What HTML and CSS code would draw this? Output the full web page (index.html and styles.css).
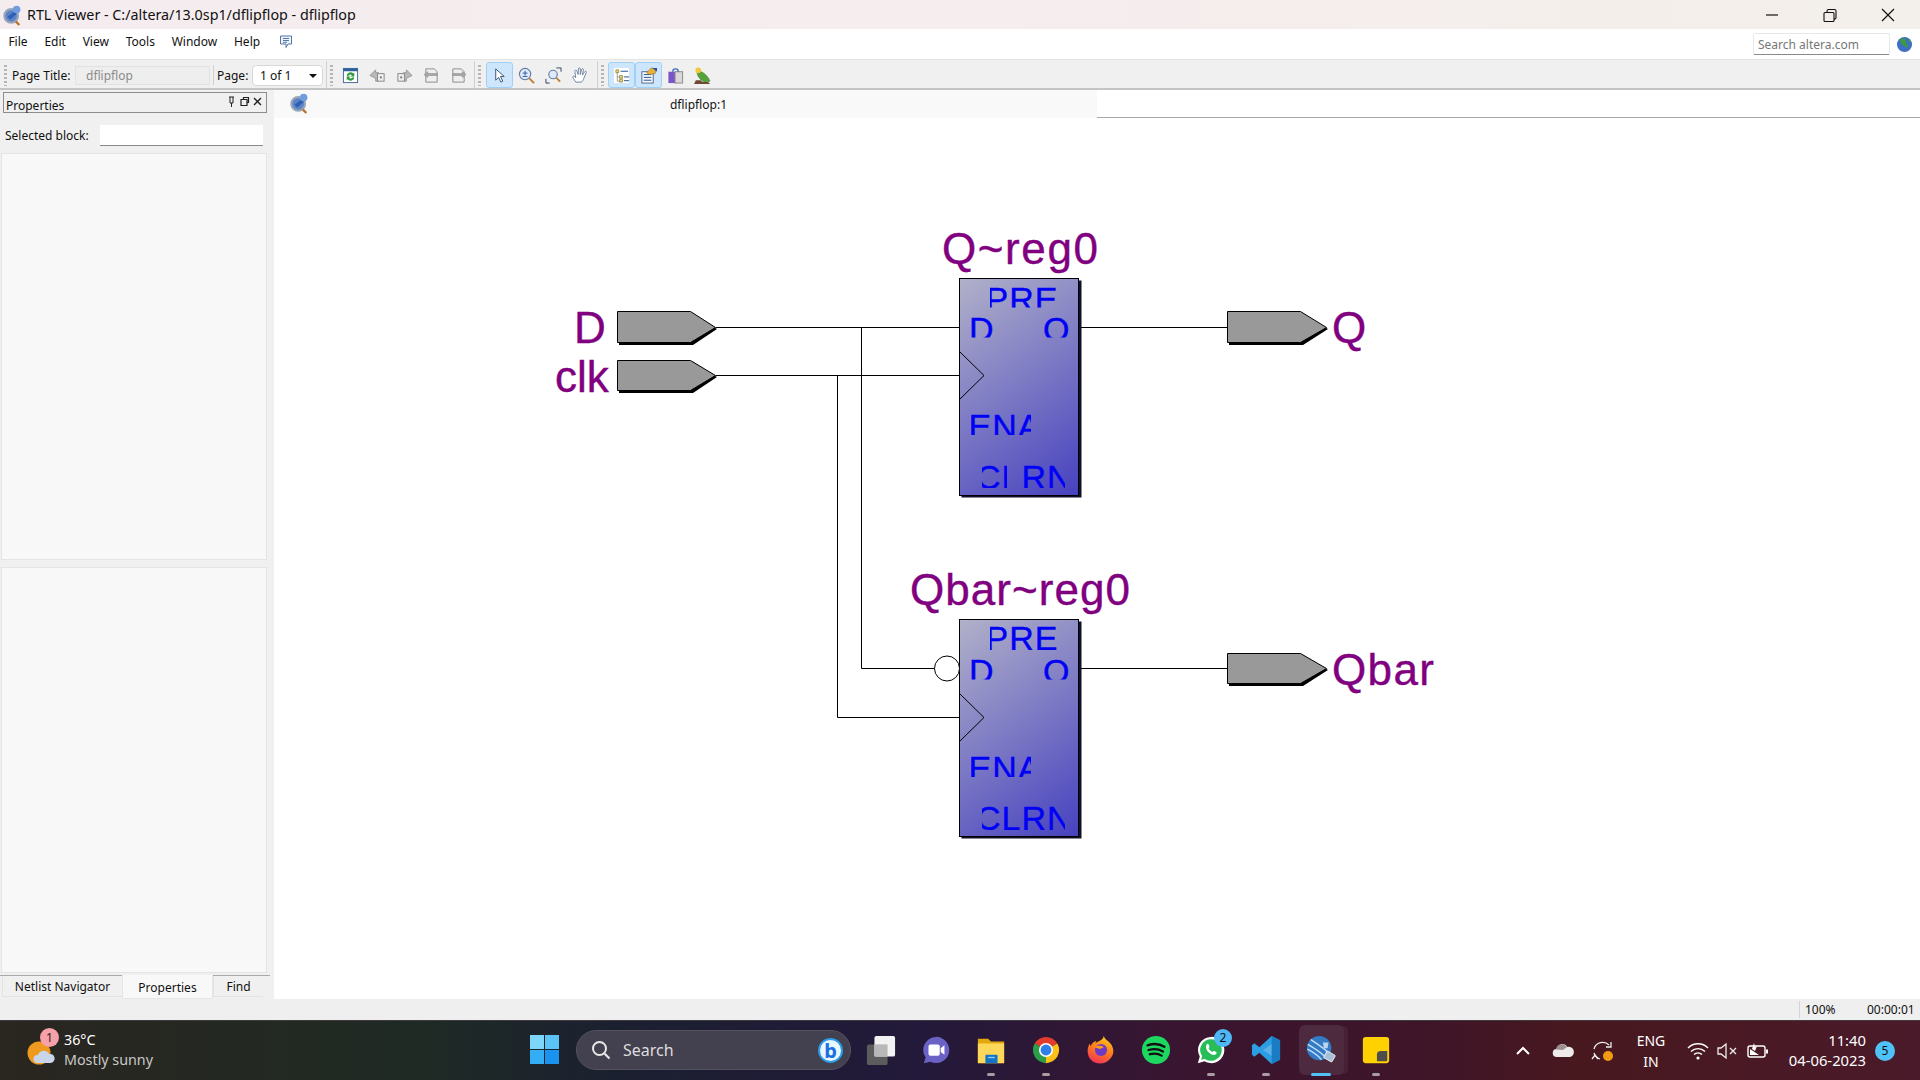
FILE: index.html
```html
<!DOCTYPE html>
<html lang="en">
<head>
  <meta charset="UTF-8">
  <title>RTL Viewer - C:/altera/13.0sp1/dflipflop - dflipflop</title>
  <link rel="stylesheet" href="styles.css">
</head>
<body>
  <svg class="defs">
    <defs>
      <symbol id="rtlIcon" viewBox="0 0 22 24">
        <circle cx="9" cy="13" r="7.5" fill="#5a83c8" stroke="#9aa7b8" stroke-width="2.4"/>
        <path d="M5 14l8-6 2 3-7 6z" fill="#2f5fb0"/>
        <circle cx="15" cy="6" r="4.2" fill="#6f9de0"/>
        <path d="M14 19l4 4" stroke="#b8752c" stroke-width="2.6"/>
      </symbol>
    </defs>
  </svg>

  <header class="titlebar">
    <svg class="title-icon"><use href="#rtlIcon"/></svg>
    <span class="title-text">RTL Viewer - C:/altera/13.0sp1/dflipflop - dflipflop</span>
    <div class="win-btns">
      <svg viewBox="0 0 58 28"><path d="M23 14h12" stroke="#111" stroke-width="1.2"/></svg>
      <svg viewBox="0 0 58 28"><path d="M24 11.5h8a1 1 0 0 1 1 1v7a1 1 0 0 1-1 1h-8a1 1 0 0 1-1-1v-7a1 1 0 0 1 1-1zM26 11.5V10a1.5 1.5 0 0 1 1.500-1.500h6A1.500 1.500 0 0 1 35 10v6.500a1.500 1.500 0 0 1-2 1.500" fill="none" stroke="#111" stroke-width="1.100"/></svg>
      <svg viewBox="0 0 58 28"><path d="M23 8l12 12M35 8L23 20" stroke="#111" stroke-width="1.200"/></svg>
    </div>
  </header>

  <nav class="menubar">
    <span class="menu-item">File</span>
    <span class="menu-item">Edit</span>
    <span class="menu-item">View</span>
    <span class="menu-item">Tools</span>
    <span class="menu-item">Window</span>
    <span class="menu-item">Help</span>
    <svg class="menu-note" viewBox="0 0 14 14"><path d="M1.500 1h11v8H9l-2 3.500V9H1.500z" fill="#eef3fb" stroke="#5578a8"/><path d="M4 3.500h6M4 5.500h6M4 7.300h4" stroke="#5578a8"/></svg>
    <div class="search-box">
      <span class="search-input">Search altera.com</span>
      <svg class="globe" viewBox="0 0 18 18"><circle cx="9" cy="9" r="8" fill="#3f6fc4"/><path d="M4 4l4-2 3 2-1 3 3 3-2 3-2-3-3-1z" fill="#3d9a3c"/><path d="M13 3l3 3-2 1z" fill="#3d9a3c"/></svg>
    </div>
  </nav>

  <div class="toolbar">
    <span class="grip"></span>
    <label class="tool-label title-label">Page Title:</label>
    <span class="page-title">dflipflop</span>
    <span class="sep sep-light"></span>
    <label class="tool-label page-label">Page:</label>
    <span class="page-select">1 of 1<i class="caret"></i></span>
    <span class="sep"></span>
    <span class="grip"></span>
    <div class="tool-group">
      <span class="tool"><svg viewBox="0 0 18 18"><rect x="1.500" y="1.500" width="15" height="15" fill="#fff" stroke="#456a94"/><rect x="1.500" y="1.500" width="15" height="3" fill="#2c5f9e"/><path d="M5 9a4 4 0 0 1 7-2l1-1v4h-4l1.500-1.300A2.400 2.400 0 0 0 6.500 10zM13 11a4 4 0 0 1-7 2l-1 1v-4h4l-1.500 1.300a2.400 2.400 0 0 0 4-.8z" fill="#2f9a3e"/></svg></span>
      <span class="tool"><svg viewBox="0 0 18 18"><path d="M1 9l6-6v3h3v9H7v-3z" fill="#b9b9b9" stroke="#999"/><rect x="9" y="7" width="7" height="8" fill="#eee" stroke="#888"/><rect x="11.500" y="10" width="2" height="2" fill="#777"/></svg></span>
      <span class="tool"><svg viewBox="0 0 18 18"><path d="M17 9l-6-6v3H8v9h3v-3z" fill="#b9b9b9" stroke="#999"/><rect x="2" y="7" width="7" height="8" fill="#eee" stroke="#888"/><rect x="4.500" y="10" width="2" height="2" fill="#777"/></svg></span>
      <span class="tool"><svg viewBox="0 0 18 18"><path d="M3 2h9l3 3v11H3z" fill="#eee" stroke="#8a8a8a"/><path d="M1 8l4-3v2h10v2H5v2z" fill="#a9a9a9" stroke="#888" stroke-width=".6"/></svg></span>
      <span class="tool"><svg viewBox="0 0 18 18"><path d="M3 2h9l3 3v11H3z" fill="#eee" stroke="#8a8a8a"/><path d="M17 8l-4-3v2H3v2h10v2z" fill="#a9a9a9" stroke="#888" stroke-width=".6"/></svg></span>
    </div>
    <span class="sep"></span>
    <span class="grip"></span>
    <div class="tool-group tool-group-mid">
      <span class="tool tool-on"><svg viewBox="0 0 18 18"><path d="M5 2v12l3-3 2.500 5 2-1-2.500-5h4z" fill="#fff" stroke="#3c4f70"/></svg></span>
      <span class="tool"><svg viewBox="0 0 18 18"><circle cx="7.500" cy="7.500" r="6" fill="#dfe9f7" stroke="#5f7da8" stroke-width="1.200"/><path d="M5 6.500h5M7.500 4v5M5 10h5" stroke="#2a5aa8"/><path d="M12 12l5 5" stroke="#c07c30" stroke-width="2"/></svg></span>
      <span class="tool"><svg viewBox="0 0 18 18"><circle cx="8.500" cy="8" r="4.500" fill="#dfe9f7" stroke="#5f7da8" stroke-width="1.200"/><path d="M12 11.500l4 4" stroke="#c07c30" stroke-width="2"/><path d="M1 12.500V17h4M12 1h5v4" fill="none" stroke="#2c3f5c"/></svg></span>
      <span class="tool"><svg viewBox="0 0 18 18"><path d="M4 16c-2-3-3.500-5-3-6 1-1 2 .5 3 1.500L3 4.500c0-1.500 2-1.500 2.200 0L6.500 8l.3-6c.1-1.300 2-1.300 2 0V8l1.400-5.500c.4-1.200 2.200-.8 1.900.5L11 8.500l2.500-3.500c.8-1 2.200-.2 1.600 1L12.500 12c-.5 2-1.500 3-2.500 4z" fill="#fff" stroke="#6a7f9c"/></svg></span>
    </div>
    <span class="sep"></span>
    <span class="grip"></span>
    <div class="tool-group">
      <span class="tool tool-on"><svg viewBox="0 0 18 18"><rect x="1" y="1" width="16" height="16" fill="#fff"/><path d="M3 3h3v3H3zM7 9h3v3H7zM7 13h3v3H7z" fill="#f3d36a" stroke="#6c6320" stroke-width=".6"/><path d="M4.500 6v9H7M4.500 10.500H7" fill="none" stroke="#777" stroke-width=".7"/><path d="M8 4.500h8M11.500 10.500H17M11.500 14.500H17" stroke="#1f4f8f"/></svg></span>
      <span class="tool tool-on"><svg viewBox="0 0 18 18"><rect x="2" y="5" width="12" height="12" fill="#f4f6fa" stroke="#52678a"/><path d="M4 8h8M4 11h8M4 14h8" stroke="#1f4f8f"/><path d="M7 6l5-5 5 1-1 5-6 1z" fill="#e8b13c" stroke="#8a6a20" stroke-width=".6"/><path d="M13 1h5v4z" fill="#2c4f9e"/></svg></span>
      <span class="tool"><svg viewBox="0 0 18 18"><rect x="1.500" y="5" width="8" height="12" fill="#7a55c8"/><rect x="8.500" y="5" width="8" height="12" fill="#d9d9d9" stroke="#888"/><path d="M6 5a3 3 0 0 1 6 0" fill="none" stroke="#3f6fc4" stroke-width="1.400"/></svg></span>
      <span class="tool"><svg viewBox="0 0 18 18"><path d="M0 18l2-4h5l2 2h6l2 2z" fill="#6c4a34"/><path d="M3 4c5 0 11 4 14 11l-6 1C7 14 3 10 3 4z" fill="#55a33b" stroke="#2d6d20" stroke-width=".5"/><circle cx="4.500" cy="3.500" r="3" fill="#f0c93a"/></svg></span>
    </div>
  </div>

  <main class="workspace">
    <aside class="side-panel">
      <div class="dock-head">
        <span>Properties</span>
        <svg class="dock-btns" viewBox="0 0 36 12"><path d="M3 1h5M4 1v6h3V1M5.500 7v4" fill="none" stroke="#222"/><path d="M15 3.500h6v6h-6zM17.500 3.500V1.500h5v5h-1.500" fill="none" stroke="#222" stroke-width="1.200"/><path d="M28 2l7 7M35 2l-7 7" stroke="#222" stroke-width="1.400"/></svg>
      </div>
      <div class="field-row">
        <label>Selected block:</label>
        <span class="field"></span>
      </div>
      <div class="list-box list-top"></div>
      <div class="list-box list-bottom"></div>
      <div class="side-tabs">
        <span class="side-tab tab-netlist">Netlist Navigator</span>
        <span class="side-tab tab-active">Properties</span>
        <span class="side-tab tab-find">Find</span>
      </div>
    </aside>

    <section class="viewer">
      <div class="tabstrip">
        <div class="sheet-tab">
          <svg class="sheet-icon"><use href="#rtlIcon"/></svg>
          <span>dflipflop:1</span>
        </div>
      </div>

      <!-- schematic, drawn in screen coordinates -->
      <svg class="schematic" width="1646" height="881" viewBox="274 118 1646 881">
        <defs>
          <linearGradient id="regFill" x1="0" y1="0" x2=".5" y2="1.200">
            <stop offset="0" stop-color="#b1b1c9"/>
            <stop offset="1" stop-color="#4742bf"/>
          </linearGradient>
          <clipPath id="cPre1"><rect x="990" y="284" width="67" height="23.500"/></clipPath>
          <clipPath id="cD1"><rect x="971" y="314" width="25" height="23.500"/></clipPath>
          <clipPath id="cQ1"><rect x="1043" y="314" width="28" height="23.500"/></clipPath>
          <clipPath id="cEna1"><rect x="971" y="411" width="60" height="24"/></clipPath>
          <clipPath id="cClr1"><path d="M982 464h25v24h-25zM1021 464h44v24h-44z"/></clipPath>
          <clipPath id="cPre2"><rect x="990" y="626" width="67" height="24"/></clipPath>
          <clipPath id="cD2"><rect x="971" y="656" width="25" height="23.500"/></clipPath>
          <clipPath id="cQ2"><rect x="1043" y="656" width="28" height="23.500"/></clipPath>
          <clipPath id="cEna2"><rect x="971" y="753" width="60" height="24"/></clipPath>
          <clipPath id="cClr2"><rect x="982" y="806" width="83" height="24"/></clipPath>
        </defs>

        <g class="wires">
          <path d="M716 327.500H959M716 375.500H959M861.500 327.500V668.500H935M837.500 375.500V717.500H959M1080 327.500H1227M1080 668.500H1227"/>
        </g>

        <g class="port">
          <path class="port-shadow" d="M619 314H693L717 329 693 345H619z"/>
          <path class="port-body" d="M617.500 311.500H690.500L715.500 327.500 690.500 342.500H617.500z"/>
          <path class="port-shadow" d="M619 362H693L717 377 693 393H619z"/>
          <path class="port-body" d="M617.500 360.500H690.500L715.500 375.500 690.500 390.500H617.500z"/>
          <path class="port-shadow" d="M1229 314H1303L1328 329 1303 345H1229z"/>
          <path class="port-body" d="M1227.500 311.500H1300.500L1326.500 327.500 1300.500 342.500H1227.500z"/>
          <path class="port-shadow" d="M1229 655H1303L1328 670 1303 686H1229z"/>
          <path class="port-body" d="M1227.500 653.500H1300.500L1326.500 668.500 1300.500 683.500H1227.500z"/>
        </g>

        <text class="net-label" x="574" y="343">D</text>
        <text class="net-label" x="555" y="392">clk</text>
        <text class="net-label" x="1332" y="343">Q</text>
        <text class="net-label" x="1332" y="685" textLength="102" lengthAdjust="spacing">Qbar</text>
        <text class="net-label" x="942" y="264" textLength="156" lengthAdjust="spacing">Q~reg0</text>
        <text class="net-label" x="910" y="605" textLength="220" lengthAdjust="spacing">Qbar~reg0</text>

        <g class="reg">
          <rect class="reg-shadow" x="961.500" y="280.500" width="120" height="217"/>
          <rect class="reg-body" fill="url(#regFill)" x="959.500" y="278.500" width="119" height="217"/>
          <path class="clk-mark" d="M959.500 351.500L984 375.500 959.500 399.500"/>
          <text class="pin" x="985.500" y="311" clip-path="url(#cPre1)">PRE</text>
          <text class="pin" x="969" y="341" clip-path="url(#cD1)">D</text>
          <text class="pin" x="1043" y="341" clip-path="url(#cQ1)">Q</text>
          <text class="pin" x="968.500" y="438" clip-path="url(#cEna1)">ENA</text>
          <text class="pin" x="976" y="488.500" clip-path="url(#cClr1)">CLRN</text>
        </g>
        <g class="reg">
          <rect class="reg-shadow" x="961.500" y="621.500" width="120" height="217"/>
          <rect class="reg-body" fill="url(#regFill)" x="959.500" y="619.500" width="119" height="217"/>
          <path class="clk-mark" d="M959.500 693.500L984 717.500 959.500 741.500"/>
          <circle class="bubble" cx="947" cy="668.500" r="12.500"/>
          <text class="pin" x="985.500" y="650" clip-path="url(#cPre2)">PRE</text>
          <text class="pin" x="969" y="683" clip-path="url(#cD2)">D</text>
          <text class="pin" x="1043" y="683" clip-path="url(#cQ2)">Q</text>
          <text class="pin" x="968.500" y="780" clip-path="url(#cEna2)">ENA</text>
          <text class="pin" x="976" y="829.500" clip-path="url(#cClr2)">CLRN</text>
        </g>
      </svg>
    </section>
  </main>

  <footer class="statusbar">
    <span class="status-zoom">100%</span>
    <span class="status-time">00:00:01</span>
  </footer>

  <div class="taskbar">
    <div class="weather">
      <svg class="weather-icon" viewBox="0 0 28 26"><circle cx="12" cy="14" r="11.500" fill="#ee9a1e"/><path d="M10 24a4 4 0 0 1 1-8 6 6 0 0 1 11-1 4.500 4.500 0 0 1 2 9z" fill="#c9d6ea"/></svg>
      <span class="weather-badge">1</span>
      <div class="weather-text">
        <span>36°C</span>
        <span class="weather-sub">Mostly sunny</span>
      </div>
    </div>

    <svg class="start" viewBox="0 0 29 29"><rect width="14" height="14" fill="#7fd6fb"/><rect x="15" width="14" height="14" fill="#5cc3f7"/><rect y="15" width="14" height="14" fill="#33aef5"/><rect x="15" y="15" width="14" height="14" fill="#1a93f0"/></svg>

    <div class="search-pill">
      <svg class="search-glass" viewBox="0 0 20 20"><circle cx="8.500" cy="8.500" r="6.500" fill="none" stroke="#e8e8e8" stroke-width="2"/><path d="M13.500 13.500l5 5" stroke="#e8e8e8" stroke-width="2.200"/></svg>
      <span>Search</span>
      <span class="bing"><b>b</b></span>
    </div>

    <div class="apps">
      <span class="app"><svg viewBox="0 0 32 32"><rect x="1" y="10" width="22" height="22" rx="2" fill="#5c5c5c"/><rect x="9" y="1" width="22" height="22" rx="2" fill="#f2f2f2"/><rect x="9" y="10" width="14" height="13" fill="#b8b8b8"/></svg></span>
      <span class="app"><svg viewBox="0 0 32 32"><path d="M16 2a14 14 0 1 1-6 26.600L3 30l2-6A14 14 0 0 1 16 2z" fill="#6a62c4"/><rect x="8" y="10" width="12" height="12" rx="2" fill="#fff"/><path d="M21 14l4-3v10l-4-3z" fill="#fff"/></svg></span>
      <span class="app app-run"><svg viewBox="0 0 32 32"><path d="M2 4h11l3 3h14v23H2z" fill="#e2a80e"/><path d="M2 9h28v21H2z" fill="#fcd75a"/><rect x="10" y="21" width="13" height="9" rx="1" fill="#1275c8"/><path d="M13 24h7" stroke="#8fd0f7" stroke-width="1.400"/></svg></span>
      <span class="app app-run"><svg viewBox="0 0 32 32"><path d="M16 16L3.880 9A14 14 0 0 1 28.120 9z" fill="#e33b2e"/><path d="M16 16L28.120 9A14 14 0 0 1 16 30z" fill="#fbc118"/><path d="M16 16L16 30A14 14 0 0 1 3.880 9z" fill="#2a9f48"/><circle cx="16" cy="16" r="7.500" fill="#fff"/><circle cx="16" cy="16" r="5.800" fill="#2f7fe8"/></svg></span>
      <span class="app"><svg viewBox="0 0 32 32"><defs><linearGradient id="foxFill" x1="0.700" y1="0" x2="0.300" y2="1"><stop offset="0" stop-color="#ffc91e"/><stop offset="0.500" stop-color="#ff7a1c"/><stop offset="1" stop-color="#f0345a"/></linearGradient></defs><path d="M19 1c1 4 5 5 8 9 3 5 3 11-1 15a14 14 0 0 1-22 0C1 20 1 14 4 9l1 3c1-3 3-5 6-6l-1 3c3-3 8-3 9-8z" fill="url(#foxFill)"/><circle cx="16" cy="16" r="6.500" fill="#6b3bc4"/><path d="M9 13c3-2 8-2 10 0l-4 2z" fill="#ff9a1c"/></svg></span>
      <span class="app"><svg viewBox="0 0 32 32"><circle cx="16" cy="16" r="15" fill="#1ed760"/><path d="M7 11c6-2 13-1.500 18 1.500M8 16c5-1.500 11-1 15.500 1.500M9.500 20.500c4-1 9-.8 12.500 1.500" fill="none" stroke="#111" stroke-width="2.500" stroke-linecap="round"/></svg></span>
      <span class="app app-run"><svg viewBox="0 0 32 32"><path d="M16 2a14 14 0 1 1-7 26L2 30l2-7A14 14 0 0 1 16 2z" fill="#fff"/><path d="M16 4.500a11.500 11.500 0 1 1-6.500 21L5.500 26.500l1-4A11.500 11.500 0 0 1 16 4.500z" fill="#29bd5a"/><path d="M11 10c1-1 2-1 2.500 0l1 2.500-1 1.500c1 2 2 3 4 4l1.500-1.200 2.500 1.200c.8.500.5 1.800-.3 2.500-1.700 1.500-4 1-7-1.500-3-2.700-4.500-6-2.700-9z" fill="#fff"/></svg><span class="app-badge">2</span></span>
      <span class="app app-run"><svg viewBox="0 0 32 32"><path d="M22 1l9 4.500v21L22 31 9 19l-5.500 4.200L1 21v-10l2.500-2.200L9 13z" fill="#2c9fe4"/><path d="M22 1l9 4.500v21L22 31z" fill="#1a7cc4"/><path d="M22 9.500L13 16l9 6.500z" fill="#f5e9ef" opacity=".25"/></svg></span>
      <span class="app app-active"><svg viewBox="0 0 32 32"><circle cx="14" cy="14" r="13" fill="#1f6fc0"/><path d="M2 10c6 4 14 8 20 15M1.500 15c5 3 11 6 15 11.500M5 5c6 4 13 8 20 15" fill="none" stroke="#bcdcf4" stroke-width="1.500"/><path d="M18 8h6l-1 6h-4z" fill="#d9e8f6" opacity=".8"/><rect x="20" y="19" width="10" height="8" rx="1" transform="rotate(30 25 23)" fill="#9fb8d0" stroke="#e4eef7"/></svg></span>
      <span class="app app-run"><svg viewBox="0 0 32 32"><path d="M5 2h22a3 3 0 0 1 3 3v22a3 3 0 0 1-3 3H5a3 3 0 0 1-3-3V5a3 3 0 0 1 3-3z" fill="#ffd100"/><path d="M28 17v10a1 1 0 0 1-1 1H17v-7a4 4 0 0 1 4-4z" fill="#4d4d4d"/></svg></span>
    </div>

    <div class="tray">
      <svg class="tray-item tray-chevron" viewBox="0 0 30 20"><path d="M9 13l6-6 6 6" fill="none" stroke="#fff" stroke-width="2"/></svg>
      <svg class="tray-item tray-cloud" viewBox="0 0 30 20"><path d="M9 16a4 4 0 0 1-.500-8 6 6 0 0 1 11-2 5 5 0 0 1 2.500 10z" fill="#efeaea"/><path d="M8 8.500a6 6 0 0 1 11-2.500l-4 3z" fill="#9b8f90"/></svg>
      <svg class="tray-item tray-sync" viewBox="0 0 30 24"><path d="M6 10a9 9 0 0 1 15-4M6 14a9 9 0 0 0 6 6" fill="none" stroke="#eee" stroke-width="1.300"/><path d="M23 3v5h-5M4 20l3-4 3 4" fill="none" stroke="#eee" stroke-width="1.300"/><circle cx="20" cy="17" r="5" fill="#f39c12"/></svg>
      <div class="tray-lang"><span>ENG</span><span>IN</span></div>
      <svg class="tray-item" viewBox="0 0 30 20"><path d="M5 7a14 14 0 0 1 20 0M8 10.500a10 10 0 0 1 14 0M11 13.500a6 6 0 0 1 8 0" fill="none" stroke="#fff" stroke-width="1.400"/><circle cx="15" cy="17" r="1.600" fill="#fff"/></svg>
      <svg class="tray-item" viewBox="0 0 30 20"><path d="M5 7h3l5-4v14l-5-4H5z" fill="none" stroke="#eee" stroke-width="1.300"/><path d="M17 7l6 6M23 7l-6 6" stroke="#eee" stroke-width="1.300"/></svg>
      <svg class="tray-item" viewBox="0 0 30 20"><rect x="5" y="5" width="17" height="11" rx="2" fill="none" stroke="#fff" stroke-width="1.400"/><rect x="23" y="8.500" width="2" height="4" fill="#fff"/><path d="M7 14V8l9 6z" fill="#fff"/><path d="M9 8l2-6 1 4 2-1-2 5" fill="#fff"/></svg>
      <div class="tray-clock"><span>11:40</span><span>04-06-2023</span></div>
      <span class="tray-notify">5</span>
    </div>
  </div>
</body>
</html>
```

FILE: styles.css
```css
* { box-sizing: border-box; margin: 0; padding: 0; }
html, body { height: 100%; }
body {
  width: 1920px;
  height: 1080px;
  overflow: hidden;
  display: flex;
  flex-direction: column;
  font-family: "Noto Sans", "Open Sans", sans-serif;
  font-size: 12px;
  color: #111;
  background: #f0f0f0;
}
.defs { display: none; }

/* window title */
.titlebar {
  height: 29px;
  display: flex;
  align-items: center;
  padding-left: 3px;
  background: linear-gradient(90deg, #f5ecef, #f6edee 50%, #f3efea);
}
.title-icon { width: 20px; height: 22px; }
.title-text { margin-left: 4px; font-size: 14.3px; }
.win-btns { margin-left: auto; display: flex; padding-right: 3px; }
.win-btns svg { width: 58px; height: 28px; }

/* menu */
.menubar {
  height: 31px;
  display: flex;
  align-items: center;
  background: #fff;
  border-bottom: 1px solid #e4e4e4;
}
.menu-item { padding: 0 8.4px; margin-bottom: 5px; }
.menu-note { width: 14px; height: 14px; margin: -4px 0 0 10px; }
.search-box {
  margin-left: auto;
  height: 31px;
  display: flex;
  align-items: center;
  padding-right: 7px;
}
.search-input {
  width: 137px;
  height: 22px;
  line-height: 21px;
  padding-left: 4px;
  color: #777;
  background: #fff;
  border: 1px solid #e8e8e8;
  border-bottom: 1px solid #8a8a8a;
  border-radius: 2px;
}
.globe { width: 17px; height: 17px; margin-left: 6px; }

/* page toolbar */
.toolbar {
  height: 30px;
  display: flex;
  align-items: center;
  padding: 2px 0 0 4px;
  background: #f0f0f0;
  border-bottom: 2px solid #c4c4c4;
}
.grip {
  width: 3px;
  height: 21px;
  margin-right: 4px;
  background: repeating-linear-gradient(180deg, #b5b5b5 0 2px, transparent 2px 4px);
}
.tool-label { white-space: nowrap; }
.title-label { width: 63px; margin-left: 1px; }
.page-title {
  width: 135px;
  height: 19px;
  line-height: 18px;
  padding-left: 10px;
  color: #8a8a8a;
  background: #eeeeee;
  border: 1px solid #e2e2e2;
}
.sep { width: 1px; height: 28px; background: #d0d0d0; margin: 0 3px 0 2px; }
.sep-light { height: 20px; margin: 0 3px; }
.page-label { width: 34px; }
.page-select {
  position: relative;
  width: 71px;
  height: 21px;
  line-height: 19px;
  margin: 0 1px;
  padding-left: 7px;
  background: #fff;
  border: 1px solid #d8d8d8;
  border-radius: 4px;
}
.caret {
  position: absolute;
  right: 5px;
  top: 8px;
  border: 4px solid transparent;
  border-top: 4px solid #111;
  border-bottom: 0;
}
.tool-group { display: flex; }
.tool-group-mid { padding: 0 1px; }
.tool {
  width: 27px;
  height: 26px;
  display: flex;
  align-items: center;
  justify-content: center;
  border: 1px solid transparent;
  border-radius: 3px;
}
.tool svg { width: 17px; height: 17px; }
.tool-on { background: #cde6fb; border-color: #9ed0f8; }

/* main area */
.workspace { flex: 1; display: flex; min-height: 0; }
.side-panel {
  width: 274px;
  display: flex;
  flex-direction: column;
  background: #f0f0f0;
  padding-top: 2px;
}
.dock-head {
  height: 21px;
  margin: 0 7px 0 3px;
  display: flex;
  justify-content: space-between;
  align-items: flex-end;
  padding: 0 4px 0 2px;
  line-height: 17px;
  border: 1px solid #8d8d8d;
}
.dock-head span { margin-bottom: -2px; }
.dock-btns { width: 36px; height: 12px; margin-bottom: 4px; }
.field-row {
  height: 40px;
  display: flex;
  align-items: center;
  padding: 5px 11px 0 5px;
}
.field-row label { width: 95px; }
.field {
  flex: 1;
  height: 21px;
  background: #fff;
  border-bottom: 1px solid #8a8a8a;
}
.list-box {
  margin: 0 7px 0 1px;
  background: #f8f8f8;
  border: 1px solid #e4e4e4;
}
.list-top { height: 407px; }
.list-bottom { height: 406px; margin-top: 7px; }
.side-tabs {
  display: flex;
  height: 24px;
  margin: 2px 4px 0 0;
  padding-left: 2px;
  border-top: 1px solid #a8a8a8;
}
.side-tab {
  height: 21px;
  line-height: 22px;
  text-align: center;
  border-bottom: 1px solid #e2e2e2;
  border-left: 1px solid #e2e2e2;
}
.tab-netlist { width: 120px; }
.tab-active {
  width: 91px;
  height: 24px;
  margin-top: -1px;
  line-height: 25px;
  background: #f8f8f8;
  border: 1px solid #e6e6e6;
  border-top: 0;
}
.tab-find { width: 50px; }
.viewer { flex: 1; display: flex; flex-direction: column; background: #fff; min-width: 0; }
.tabstrip { height: 28px; border-bottom: 1px solid #a9a9a9; }
.sheet-tab {
  position: relative;
  width: 823px;
  height: 28px;
  line-height: 30px;
  text-align: center;
  padding-left: 26px;
  background: #f9f9f9;
}
.sheet-icon { position: absolute; left: 16px; top: 2px; width: 20px; height: 22px; }
.schematic { display: block; }

/* schematic parts */
.wires path { fill: none; stroke: #000; stroke-width: 1; }
.port-shadow { fill: #000; }
.port-body { fill: #999; stroke: #000; stroke-width: 1; }
.net-label {
  font-family: "Liberation Sans", Arial, sans-serif;
  font-size: 44px;
  fill: #800080;
  stroke: #800080;
  stroke-width: .4;
}
.reg-shadow { fill: #10102a; }
.reg-body { stroke: #000; stroke-width: 1; }
.clk-mark { fill: none; stroke: #000; stroke-width: 1; }
.bubble { fill: #fff; stroke: #000; stroke-width: 1; }
.pin {
  font-family: "Liberation Sans", Arial, sans-serif;
  font-size: 34px;
  letter-spacing: 1px;
  fill: #0000f5;
  stroke: #0000f5;
  stroke-width: .4;
}

/* status line */
.statusbar {
  height: 21px;
  display: flex;
  justify-content: flex-end;
  align-items: center;
  background: #efefef;
}
.status-zoom { width: 68px; padding-left: 5px; border-left: 1px solid #d4d4d4; }
.status-time { width: 53px; }

/* windows taskbar */
.taskbar {
  height: 60px;
  display: flex;
  align-items: center;
  color: #fff;
  background: linear-gradient(90deg, #2a2620 0, #1f2a24 22%, #1b2030 32%, #23193a 48%, #3a1530 62%, #3f1528 75%, #48181f 82%, #4b1a2a 100%);
  border-top: 1px solid #3d3a40;
}
.weather {
  position: relative;
  width: 530px;
  height: 60px;
  display: flex;
  align-items: center;
  padding-left: 27px;
  flex: none;
}
.weather-icon { width: 28px; height: 26px; margin-top: 3px; }
.weather-badge {
  position: absolute;
  left: 40px;
  top: 7px;
  width: 19px;
  height: 19px;
  line-height: 19px;
  text-align: center;
  color: #222;
  background: #f7a0a8;
  border-radius: 50%;
}
.weather-text {
  margin: 0 0 2px 9px;
  display: flex;
  flex-direction: column;
  font-size: 14.3px;
  line-height: 20px;
}
.weather-sub { color: #c9c9c9; }
.start { width: 29px; height: 29px; flex: none; margin-bottom: 2px; }
.search-pill {
  width: 275px;
  height: 40px;
  margin: 0 0 1px 17px;
  display: flex;
  align-items: center;
  padding-left: 14px;
  flex: none;
  font-size: 16px;
  color: #ddd;
  background: #43404f;
  border: 1px solid #55525f;
  border-radius: 20px;
}
.search-glass { width: 20px; height: 20px; margin-right: 12px; }
.bing {
  margin-left: auto;
  margin-right: 7px;
  width: 25px;
  height: 25px;
  line-height: 22px;
  text-align: center;
  font-size: 20px;
  color: #1c6fe0;
  background: #e8f6ff;
  border: 2px solid #2c9be8;
  border-radius: 50%;
}
.apps { display: flex; margin: 0 0 1px 2px; }
.app {
  position: relative;
  width: 55px;
  height: 58px;
  display: flex;
  align-items: center;
  justify-content: center;
}
.app svg { width: 30px; height: 30px; }
.app-run::after {
  content: "";
  position: absolute;
  left: 24px;
  bottom: 3px;
  width: 8px;
  height: 3px;
  border-radius: 2px;
  background: #a99ca2;
}
.app-badge {
  position: absolute;
  left: 31px;
  top: 8px;
  width: 18px;
  height: 18px;
  line-height: 18px;
  text-align: center;
  color: #111;
  background: #4db8f5;
  border-radius: 50%;
}
.app-active::before {
  content: "";
  position: absolute;
  left: 6px;
  top: 4px;
  width: 45px;
  height: 50px;
  background: rgba(255, 255, 255, .09);
  border-radius: 6px;
  box-shadow: 5px 0 0 -1px rgba(255, 255, 255, .05);
}
.app-active::after {
  content: "";
  position: absolute;
  left: 18px;
  bottom: 3px;
  width: 20px;
  height: 3px;
  border-radius: 2px;
  background: #4fc3f7;
}
.tray { margin-left: auto; display: flex; align-items: center; padding-right: 25px; }
.tray-item { width: 30px; height: 20px; flex: none; }
.tray-cloud { margin-left: 10px; }
.tray-sync { margin-left: 10px; height: 24px; }
.tray-lang {
  width: 40px;
  margin: 0 12px 0 13px;
  display: flex;
  flex-direction: column;
  align-items: center;
  font-size: 14px;
  line-height: 21px;
}
.tray-clock {
  width: 93px;
  margin-bottom: 2px;
  display: flex;
  flex-direction: column;
  align-items: flex-end;
  font-size: 14.8px;
  line-height: 20px;
  white-space: nowrap;
}
.tray-notify {
  width: 20px;
  height: 20px;
  margin-left: 9px;
  line-height: 20px;
  text-align: center;
  color: #111;
  background: #4fc3f7;
  border-radius: 50%;
}
```
